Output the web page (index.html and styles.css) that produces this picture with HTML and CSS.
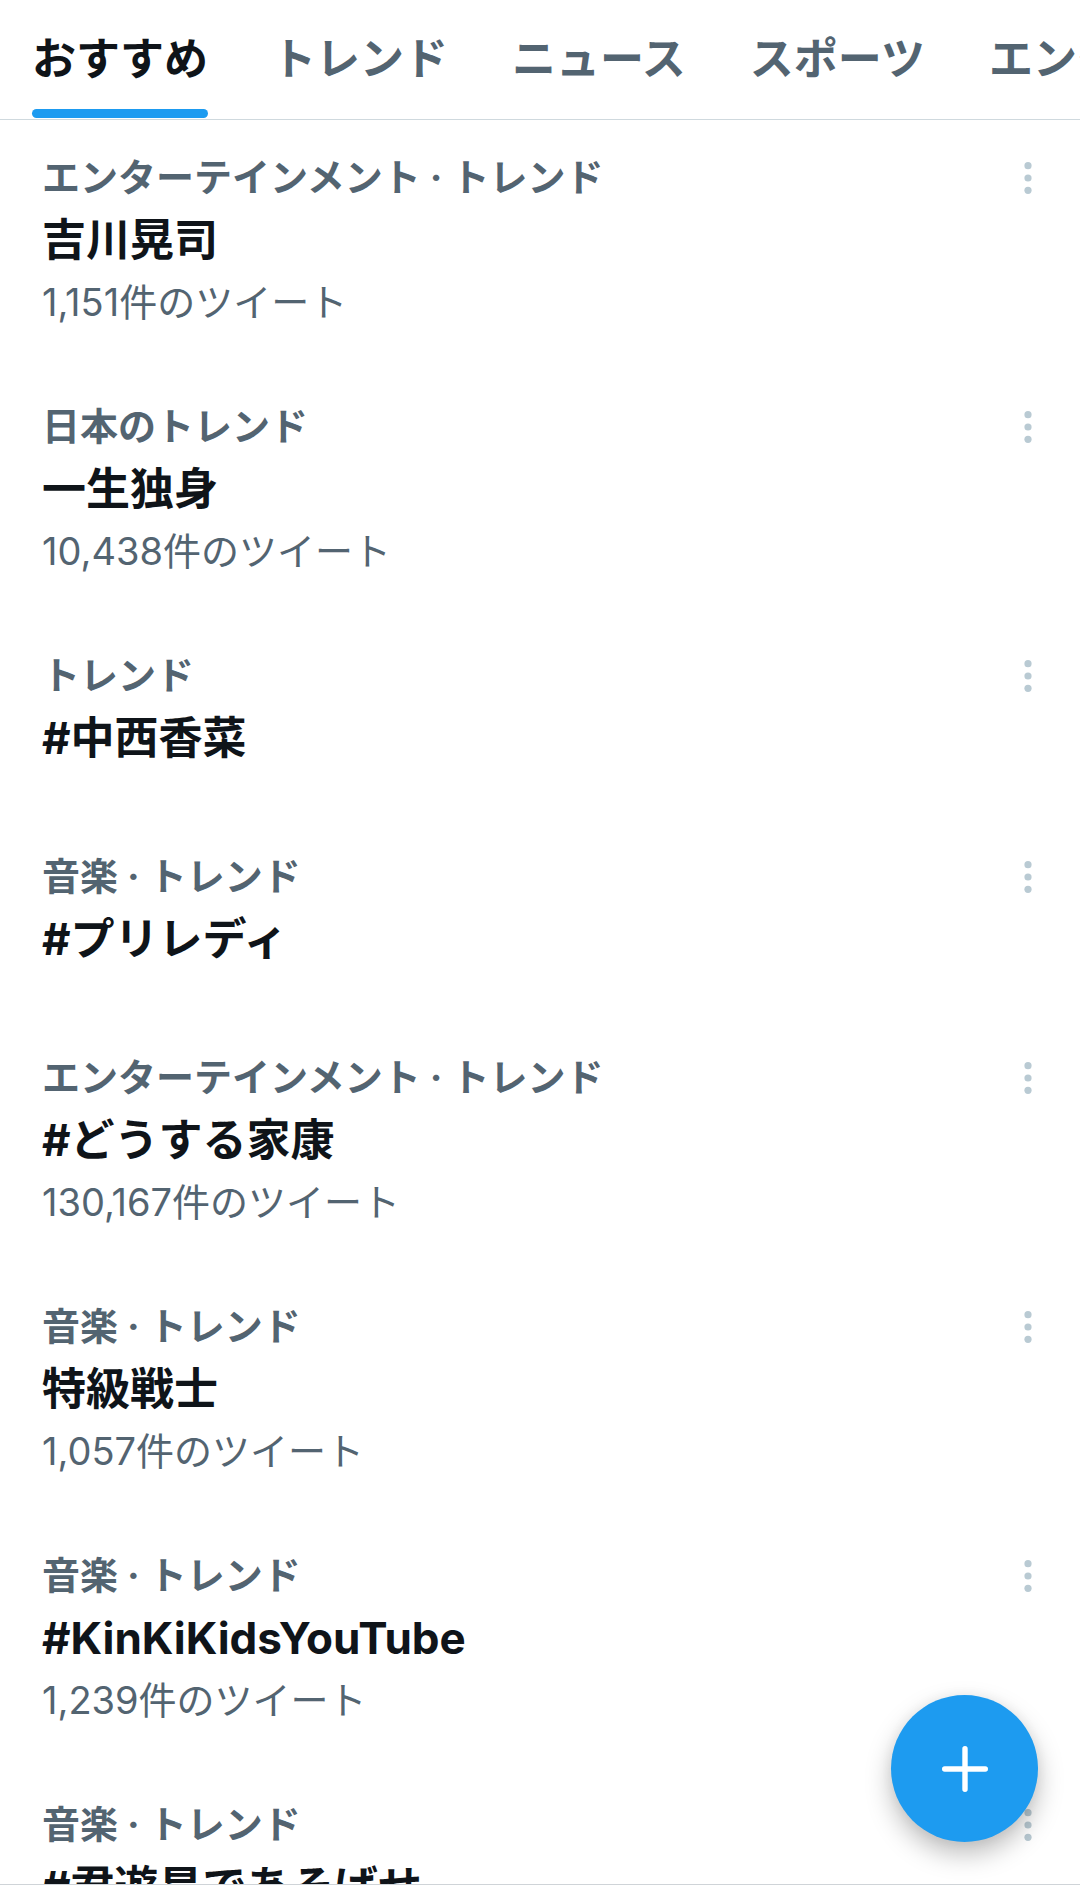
FILE: index.html
```html
<!DOCTYPE html>
<html lang="ja">
<head>
<meta charset="utf-8">
<meta name="viewport" content="width=device-width, initial-scale=1">
<title>トレンド</title>
<link rel="stylesheet" href="styles.css">
</head>
<body>
<div class="screen">
  <nav class="tabs">
    <a class="tab tab-active" href="#" aria-current="page">おすすめ</a>
    <a class="tab" href="#">トレンド</a>
    <a class="tab" href="#">ニュース</a>
    <a class="tab" href="#">スポーツ</a>
    <a class="tab" href="#">エンターテインメント</a>
  </nav>
  <main class="trends">
    <article class="trend">
      <div class="trend-text">
        <p class="context">エンターテインメント · トレンド</p>
        <h2 class="topic">吉川晃司</h2>
        <p class="count">1,151件のツイート</p>
      </div>
      <button class="more" type="button" aria-label="もっと見る"><svg viewBox="0 0 8 32"><circle cx="4" cy="3.7" r="3.6"/><circle cx="4" cy="16" r="3.6"/><circle cx="4" cy="28.3" r="3.6"/></svg></button>
    </article>
    <article class="trend">
      <div class="trend-text">
        <p class="context">日本のトレンド</p>
        <h2 class="topic">一生独身</h2>
        <p class="count">10,438件のツイート</p>
      </div>
      <button class="more" type="button" aria-label="もっと見る"><svg viewBox="0 0 8 32"><circle cx="4" cy="3.7" r="3.6"/><circle cx="4" cy="16" r="3.6"/><circle cx="4" cy="28.3" r="3.6"/></svg></button>
    </article>
    <article class="trend">
      <div class="trend-text">
        <p class="context">トレンド</p>
        <h2 class="topic">#中西香菜</h2>
      </div>
      <button class="more" type="button" aria-label="もっと見る"><svg viewBox="0 0 8 32"><circle cx="4" cy="3.7" r="3.6"/><circle cx="4" cy="16" r="3.6"/><circle cx="4" cy="28.3" r="3.6"/></svg></button>
    </article>
    <article class="trend">
      <div class="trend-text">
        <p class="context">音楽 · トレンド</p>
        <h2 class="topic">#プリレディ</h2>
      </div>
      <button class="more" type="button" aria-label="もっと見る"><svg viewBox="0 0 8 32"><circle cx="4" cy="3.7" r="3.6"/><circle cx="4" cy="16" r="3.6"/><circle cx="4" cy="28.3" r="3.6"/></svg></button>
    </article>
    <article class="trend">
      <div class="trend-text">
        <p class="context">エンターテインメント · トレンド</p>
        <h2 class="topic">#どうする家康</h2>
        <p class="count">130,167件のツイート</p>
      </div>
      <button class="more" type="button" aria-label="もっと見る"><svg viewBox="0 0 8 32"><circle cx="4" cy="3.7" r="3.6"/><circle cx="4" cy="16" r="3.6"/><circle cx="4" cy="28.3" r="3.6"/></svg></button>
    </article>
    <article class="trend">
      <div class="trend-text">
        <p class="context">音楽 · トレンド</p>
        <h2 class="topic">特級戦士</h2>
        <p class="count">1,057件のツイート</p>
      </div>
      <button class="more" type="button" aria-label="もっと見る"><svg viewBox="0 0 8 32"><circle cx="4" cy="3.7" r="3.6"/><circle cx="4" cy="16" r="3.6"/><circle cx="4" cy="28.3" r="3.6"/></svg></button>
    </article>
    <article class="trend">
      <div class="trend-text">
        <p class="context">音楽 · トレンド</p>
        <h2 class="topic">#KinKiKidsYouTube</h2>
        <p class="count">1,239件のツイート</p>
      </div>
      <button class="more" type="button" aria-label="もっと見る"><svg viewBox="0 0 8 32"><circle cx="4" cy="3.7" r="3.6"/><circle cx="4" cy="16" r="3.6"/><circle cx="4" cy="28.3" r="3.6"/></svg></button>
    </article>
    <article class="trend">
      <div class="trend-text">
        <p class="context">音楽 · トレンド</p>
        <h2 class="topic">#君遊星であそばせ</h2>
      </div>
      <button class="more" type="button" aria-label="もっと見る"><svg viewBox="0 0 8 32"><circle cx="4" cy="3.7" r="3.6"/><circle cx="4" cy="16" r="3.6"/><circle cx="4" cy="28.3" r="3.6"/></svg></button>
    </article>
  </main>
  <div class="bottom-edge"></div>
  <button class="compose" type="button" aria-label="ツイートする"><svg viewBox="0 0 48 48"><path d="M24 3.7v40.6M3.7 24h40.6"/></svg></button>
</div>
</body>
</html>
```

FILE: styles.css
```css
* {
  box-sizing: border-box;
}

body {
  margin: 0;
  background: #fff;
  color: #0f1419;
  font-family: Inter, "Noto Sans CJK JP", sans-serif;
}

.screen {
  display: flex;
  flex-direction: column;
  height: 100vh;
  overflow: hidden;
}

.tabs {
  display: flex;
  flex: none;
  gap: 64px;
  height: 120px;
  padding: 0 32px;
  overflow: hidden;
  border-bottom: 1px solid #cfd9de;
}

.tab {
  display: flex;
  flex: none;
  flex-direction: column;
  justify-content: space-between;
  padding-bottom: 1px;
  color: #536471;
  font-size: 44px;
  font-weight: 700;
  line-height: 118px;
  text-decoration: none;
  white-space: nowrap;
}

.tab-active {
  color: #0f1419;
}

.tab-active::after {
  content: "";
  height: 9px;
  margin-top: -9px;
  border-radius: 5px;
  background: #1d9bf0;
}

.trends {
  flex: 1;
  min-height: 0;
  overflow: hidden;
}

.trend {
  display: flex;
  justify-content: space-between;
  align-items: flex-start;
  min-height: 201px;
  padding: 26px 42px 37px;
}

.context,
.topic,
.count {
  margin: 0;
}

.context {
  color: #536471;
  font-size: 38px;
  font-weight: 700;
  line-height: 62px;
}

.topic {
  font-size: 44px;
  font-weight: 700;
  line-height: 64px;
}

.count {
  color: #536471;
  font-size: 38px;
  line-height: 60px;
}

.more {
  padding: 16px 6px;
  border: 0;
  background: none;
}

.more svg {
  display: block;
  width: 8px;
  height: 32px;
  fill: #b9cad3;
}

.bottom-edge {
  flex: none;
  height: 3px;
  border-top: 1px solid #cfd4d8;
}

.compose {
  position: fixed;
  right: 42px;
  bottom: 45px;
  display: grid;
  place-items: center;
  width: 147px;
  height: 147px;
  padding: 0;
  border: 0;
  border-radius: 50%;
  background: #1d9bf0;
  box-shadow: 0 12px 26px rgba(0, 0, 0, 0.26), 0 0 16px rgba(0, 0, 0, 0.06);
}

.compose svg {
  width: 48px;
  height: 48px;
  fill: none;
  stroke: #fff;
  stroke-width: 5.4;
  stroke-linecap: round;
}
```
